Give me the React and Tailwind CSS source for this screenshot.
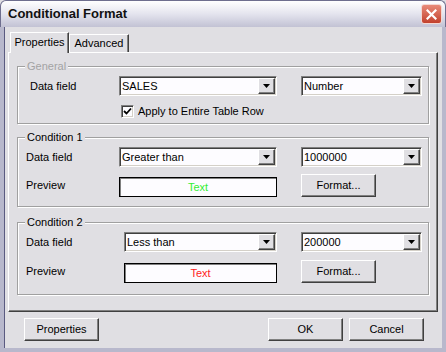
import React from 'react';

const raised = 'border border-t-white border-l-white border-r-[#404040] border-b-[#404040] shadow-[inset_-1px_-1px_0_#808080]';
const sunken = 'border border-t-[#808080] border-l-[#808080] border-r-white border-b-white shadow-[inset_1px_1px_0_#404040,inset_-1px_-1px_0_#d4d0c8]';

const Arrow = () => (
    <svg width="7" height="4" viewBox="0 0 7 4">
        <polygon points="0,0 7,0 3.5,4" fill="#000" />
    </svg>
);

const Combo = ({ value, className }) => (
    <div className={`flex items-center h-[20px] bg-[#fdfcff] ${sunken} ${className}`}>
        <span className="flex-1 pl-[2px] leading-[14px]">{value}</span>
        <span className={`w-[17px] h-[16px] mr-[1px] flex items-center justify-center bg-[#e0dfe3] ${raised}`}>
            <Arrow />
        </span>
    </div>
);

const Button = ({ children, className }) => (
    <div className={`h-[23px] w-[75px] flex items-center justify-center bg-[#e0dfe3] ${raised} ${className}`}>
        {children}
    </div>
);

const Preview = ({ color, className }) => (
    <div className={`h-[20px] bg-[#fdfcff] border border-black shadow-[inset_1px_1px_0_#808080] flex items-center justify-center ${className}`}>
        <span className={color}>Text</span>
    </div>
);

const Group = ({ title, disabled, className, children }) => (
    <div className={`relative border border-[#a0a0a0] shadow-[1px_1px_0_#fff,inset_1px_1px_0_#fff] ${className}`}>
        <span className={`absolute left-[7px] -top-[7px] px-[2px] bg-[#e0dfe3] leading-[13px] ${disabled ? 'text-[#a3a3a3]' : ''}`}>
            {title}
        </span>
        {children}
    </div>
);

export default function App() {
    return (
        <div className="w-[446px] h-[352px] flex flex-col bg-[#e0dfe3] text-[11px] text-black font-['Liberation_Sans',Arial,sans-serif] overflow-hidden">
            {/* Title bar */}
            <div className="h-[27px] shrink-0 flex items-center justify-between pl-[7px] pr-[3px] rounded-t-[6px] border border-b-0 border-[#6e6e8e] bg-gradient-to-b from-[#ffffff] via-[#e4e4ee] to-[#c2c2d4]">
                <span className="font-bold text-[13px] leading-[16px] text-[#111]">Conditional Format</span>
                <div className="w-[21px] h-[20px] rounded-[3px] border border-[#f4d8d2] bg-gradient-to-b from-[#e88a78] to-[#c2402c] flex items-center justify-center">
                    <svg width="11" height="11" viewBox="0 0 11 11">
                        <path d="M1.5 1.5 L9.5 9.5 M9.5 1.5 L1.5 9.5" stroke="#fff" strokeWidth="2.2" strokeLinecap="square" />
                    </svg>
                </div>
            </div>

            {/* Body */}
            <div className="flex-1 flex flex-col pt-[5px] pl-[4px] pr-[4px] border-x-[4px] border-b-[4px] border-[#b8b8cc] shadow-[inset_1px_0_0_#5a5a80]">
                {/* Tabs */}
                <div className="flex items-end h-[20px] pl-[2px]">
                    <div className="relative z-10 -mb-px h-[21px] w-[59px] flex items-center justify-center bg-[#e0dfe3] border border-b-0 border-t-white border-l-white border-r-[#404040] shadow-[inset_-1px_0_0_#808080]">
                        <span className="-mt-[2px]">Properties</span>
                    </div>
                    <div className="h-[18px] w-[60px] flex items-center justify-center border border-b-0 border-t-white border-l-white border-r-[#404040] shadow-[inset_-1px_0_0_#808080]">
                        Advanced
                    </div>
                </div>

                {/* Panel */}
                <div className="h-[260px] w-[430px] px-[8px] border border-t-white border-l-white border-r-[#404040] border-b-[#404040] shadow-[inset_-1px_-1px_0_#808080]">
                    <Group title="General" disabled className="mt-[13px] pt-[9px] pb-[5px]">
                        <div className="flex items-center">
                            <span className="pl-[12px] w-[101px]">Data field</span>
                            <Combo value="SALES" className="w-[158px]" />
                            <Combo value="Number" className="w-[121px] ml-[24px]" />
                        </div>
                        <div className="flex items-center mt-[9px] ml-[103px]">
                            <span className={`w-[13px] h-[13px] bg-[#fdfcff] flex items-center justify-center ${sunken}`}>
                                <svg width="9" height="9" viewBox="0 0 9 9">
                                    <path d="M1 4 L3.5 6.5 L8 1.5" stroke="#000" strokeWidth="1.8" fill="none" />
                                </svg>
                            </span>
                            <span className="ml-[4px] leading-[13px]">Apply to Entire Table Row</span>
                        </div>
                    </Group>

                    <Group title="Condition 1" className="mt-[13px] pt-[9px] pb-[9px]">
                        <div className="flex items-center">
                            <span className="pl-[8px] w-[101px]">Data field</span>
                            <Combo value="Greater than" className="w-[158px]" />
                            <Combo value="1000000" className="w-[121px] ml-[24px]" />
                        </div>
                        <div className="flex items-center mt-[7px] h-[23px]">
                            <span className="pl-[8px] w-[101px]">Preview</span>
                            <Preview color="text-[#33ee33]" className="w-[158px] mt-[3px]" />
                            <Button className="ml-[24px]">Format...</Button>
                        </div>
                    </Group>

                    <Group title="Condition 2" className="mt-[15px] pt-[9px] pb-[11px]">
                        <div className="flex items-center">
                            <span className="pl-[8px] w-[106px]">Data field</span>
                            <Combo value="Less than" className="w-[153px]" />
                            <Combo value="200000" className="w-[121px] ml-[24px]" />
                        </div>
                        <div className="flex items-center mt-[8px] h-[23px]">
                            <span className="pl-[8px] w-[106px]">Preview</span>
                            <Preview color="text-[#ff2222]" className="w-[153px] mt-[3px]" />
                            <Button className="ml-[24px]">Format...</Button>
                        </div>
                    </Group>
                </div>

                {/* Footer buttons */}
                <div className="flex items-center mt-[6px] pl-[16px] pr-[14px]">
                    <Button>Properties</Button>
                    <div className="flex-1" />
                    <Button>OK</Button>
                    <Button className="ml-[6px]">Cancel</Button>
                </div>
            </div>
        </div>
    );
}
